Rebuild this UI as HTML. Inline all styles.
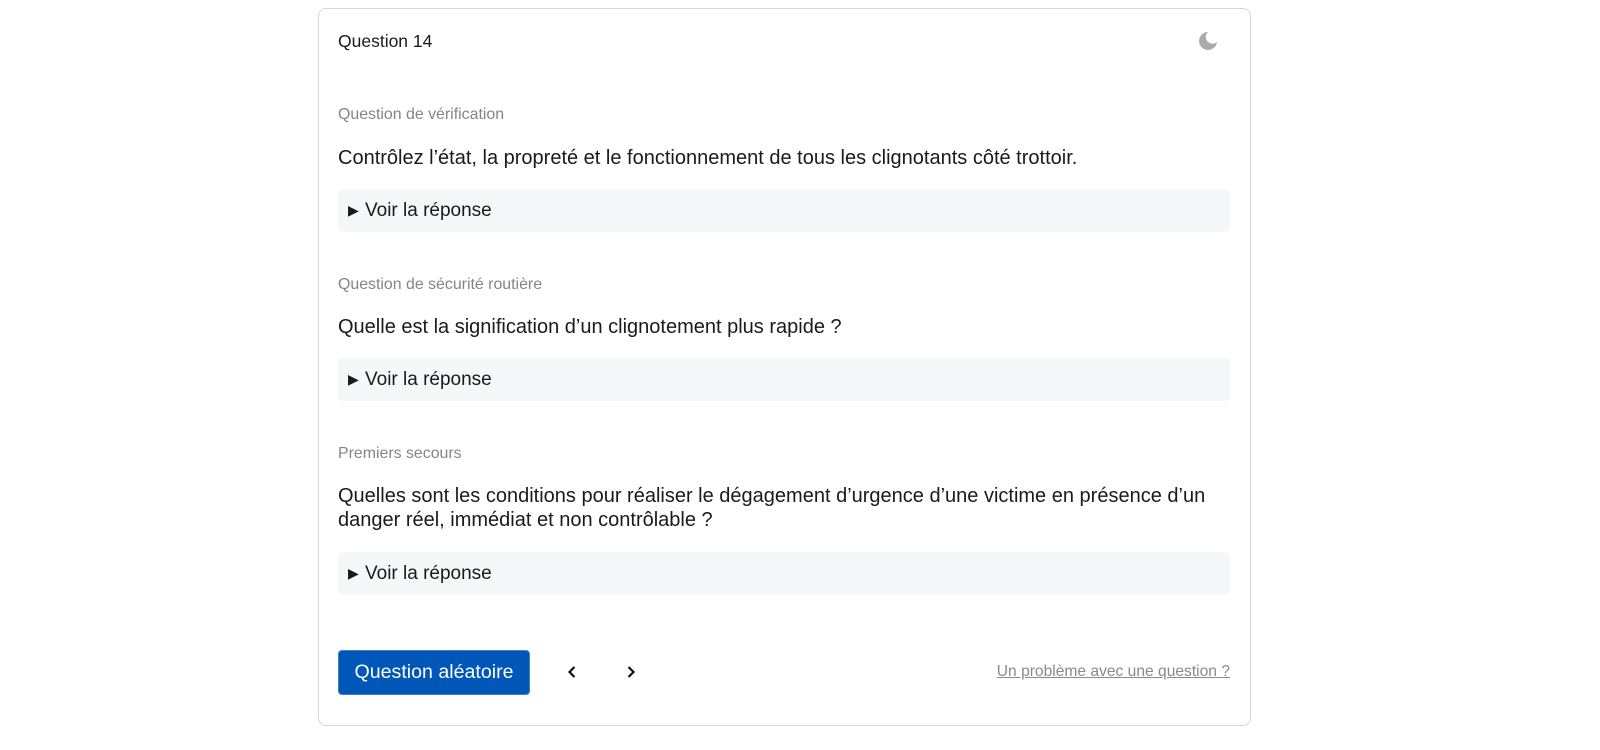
<!DOCTYPE html>
<html><head><meta charset="utf-8"><style>
*{box-sizing:border-box;margin:0;padding:0}
body{width:1600px;height:750px;background:#fff;font-family:"Liberation Sans",Roboto,sans-serif;color:#1a1a1a;position:relative;overflow:hidden}
.card{position:absolute;left:318px;top:8px;width:933px;height:718px;border:1px solid #d6d6d6;border-radius:8px}
.a{position:absolute;left:338px;white-space:nowrap}
.h{font-size:17.5px;top:31px}
.l{font-size:15.9px;color:#858585}
.q{font-size:20px;line-height:24px}
.box{position:absolute;left:338px;width:892px;height:43px;background:#f6f7f8;border-radius:4px;font-size:19px;padding-left:10px;line-height:43px}
.box span{font-size:14px;display:inline-block;width:17px;vertical-align:1px}
.btn{position:absolute;left:338px;top:650px;width:192px;height:45px;background:#0057b7;border:1px solid #3a80d0;border-radius:4px;color:#fff;font-size:19.6px;text-align:center;line-height:43px}
.link{position:absolute;right:370px;top:663px;font-size:15.6px;color:#8a8a8a;text-decoration:underline}
</style></head><body>
<div class="card"></div>
<div class="a h">Question 14</div>
<svg style="position:absolute;left:1197px;top:30px" width="22" height="22" viewBox="0 0 22 22"><path d="M11 2 A9 9 0 1 0 20 12 A6.5 6.5 0 1 1 11 2Z" fill="#aaa"/></svg>
<div class="a l" style="top:106px">Question de vérification</div>
<div class="a q" style="top:146px">Contrôlez l’état, la propreté et le fonctionnement de tous les clignotants côté trottoir.</div>
<div class="box" style="top:189px"><span>▶</span>Voir la réponse</div>
<div class="a l" style="top:276px">Question de sécurité routière</div>
<div class="a q" style="top:315px">Quelle est la signification d’un clignotement plus rapide ?</div>
<div class="box" style="top:358px"><span>▶</span>Voir la réponse</div>
<div class="a l" style="top:445px">Premiers secours</div>
<div class="a q" style="top:484px">Quelles sont les conditions pour réaliser le dégagement d’urgence d’une victime en présence d’un<br>danger réel, immédiat et non contrôlable ?</div>
<div class="box" style="top:552px"><span>▶</span>Voir la réponse</div>
<div class="btn">Question aléatoire</div>
<svg style="position:absolute;left:566px;top:665px" width="12" height="14" viewBox="0 0 12 14"><path d="M8.5 2 L3.5 7 L8.5 12" stroke="#111" stroke-width="2.2" fill="none"/></svg>
<svg style="position:absolute;left:625px;top:665px" width="12" height="14" viewBox="0 0 12 14"><path d="M3.5 2 L8.5 7 L3.5 12" stroke="#111" stroke-width="2.2" fill="none"/></svg>
<div class="link">Un problème avec une question ?</div>
</body></html>
